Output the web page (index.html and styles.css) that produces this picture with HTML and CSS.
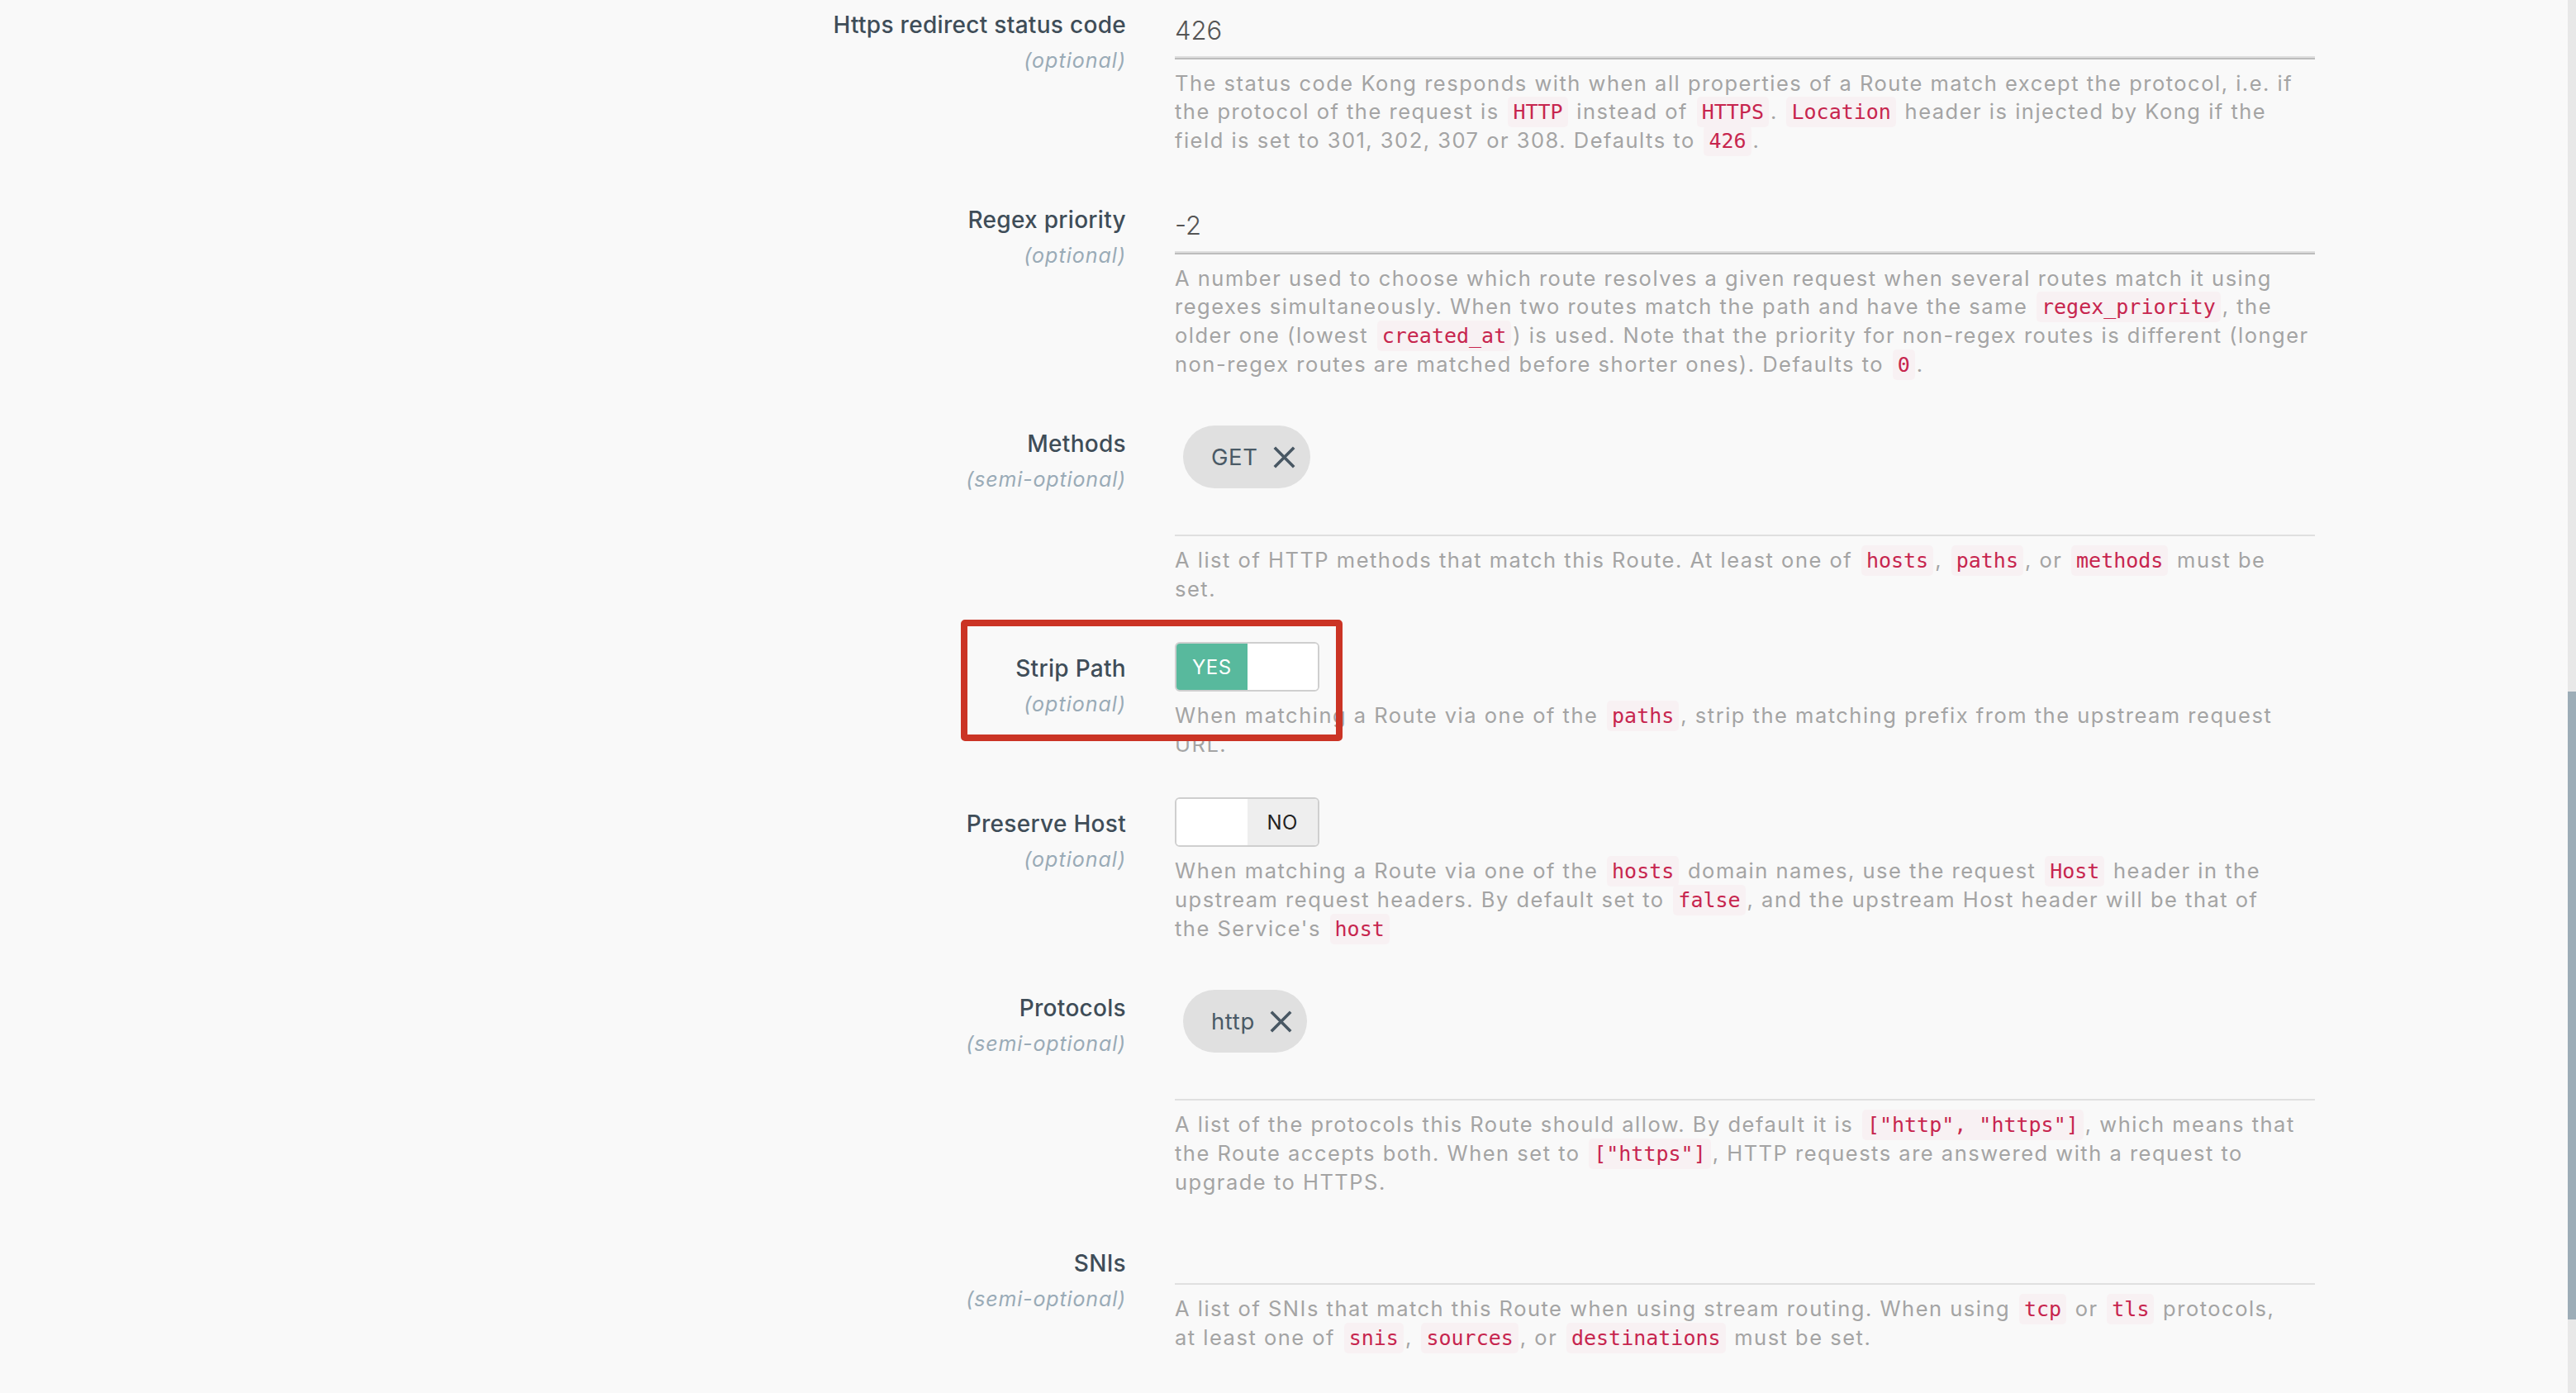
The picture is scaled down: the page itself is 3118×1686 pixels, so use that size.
FILE: index.html
```html
<!DOCTYPE html>
<html lang="en">
<head>
<meta charset="utf-8">
<title>Route form</title>
<link rel="stylesheet" href="styles.css">
</head>
<body>
<main class="page">
  <form class="form">
    <div class="row row-text">
      <div class="label-col">
        <div class="label">Https redirect status code</div>
        <div class="hint">(optional)</div>
      </div>
      <div class="control">
        <div class="text-input">426</div>
        <p class="desc">The status code Kong responds with when all properties of a Route match except the protocol, i.e. if the protocol of the request is <code>HTTP</code> instead of <code>HTTPS</code>. <code>Location</code> header is injected by Kong if the field is set to 301, 302, 307 or 308. Defaults to <code>426</code>.</p>
      </div>
    </div>

    <div class="row row-text">
      <div class="label-col">
        <div class="label">Regex priority</div>
        <div class="hint">(optional)</div>
      </div>
      <div class="control">
        <div class="text-input">-2</div>
        <p class="desc">A number used to choose which route resolves a given request when several routes match it using regexes simultaneously. When two routes match the path and have the same <code>regex_priority</code>, the older one (lowest <code>created_at</code>) is used. Note that the priority for non-regex routes is different (longer non-regex routes are matched before shorter ones). Defaults to <code>0</code>.</p>
      </div>
    </div>

    <div class="row row-select">
      <div class="label-col">
        <div class="label">Methods</div>
        <div class="hint semi">(semi-optional)</div>
      </div>
      <div class="control">
        <div class="select">
          <div class="chips">
            <span class="chip">GET<svg class="chip-x" viewBox="0 0 27 27" width="27" height="27"><path d="M1.8 1.8 L25.2 25.2 M25.2 1.8 L1.8 25.2" stroke="#485763" stroke-width="3.6" fill="none"/></svg></span>
          </div>
          <div class="select-line"></div>
        </div>
        <p class="desc">A list of HTTP methods that match this Route. At least one of <code>hosts</code>, <code>paths</code>, or <code>methods</code> must be<br>set.</p>
      </div>
    </div>

    <div class="row row-toggle">
      <div class="label-col">
        <div class="label">Strip Path</div>
        <div class="hint">(optional)</div>
      </div>
      <div class="control">
        <div class="toggle">
          <span class="toggle-half on">YES</span>
          <span class="toggle-half blank"></span>
        </div>
        <p class="desc">When matching a Route via one of the <code>paths</code>, strip the matching prefix from the upstream request URL.</p>
      </div>
      <div class="highlight"></div>
    </div>

    <div class="row row-toggle">
      <div class="label-col">
        <div class="label">Preserve Host</div>
        <div class="hint">(optional)</div>
      </div>
      <div class="control">
        <div class="toggle">
          <span class="toggle-half blank"></span>
          <span class="toggle-half off">NO</span>
        </div>
        <p class="desc">When matching a Route via one of the <code>hosts</code> domain names, use the request <code>Host</code> header in the upstream request headers. By default set to <code>false</code>, and the upstream Host header will be that of<br>the Service's <code>host</code></p>
      </div>
    </div>

    <div class="row row-select">
      <div class="label-col">
        <div class="label">Protocols</div>
        <div class="hint semi">(semi-optional)</div>
      </div>
      <div class="control">
        <div class="select">
          <div class="chips">
            <span class="chip">http<svg class="chip-x" viewBox="0 0 27 27" width="27" height="27"><path d="M1.8 1.8 L25.2 25.2 M25.2 1.8 L1.8 25.2" stroke="#485763" stroke-width="3.6" fill="none"/></svg></span>
          </div>
          <div class="select-line"></div>
        </div>
        <p class="desc">A list of the protocols this Route should allow. By default it is <code>["http", "https"]</code>, which means that the Route accepts both. When set to <code>["https"]</code>, HTTP requests are answered with a request to upgrade to HTTPS.</p>
      </div>
    </div>

    <div class="row row-select row-last">
      <div class="label-col">
        <div class="label">SNIs</div>
        <div class="hint semi">(semi-optional)</div>
      </div>
      <div class="control">
        <div class="select">
          <div class="select-line"></div>
        </div>
        <p class="desc">A list of SNIs that match this Route when using stream routing. When using <code>tcp</code> or <code>tls</code> protocols,<br>at least one of <code>snis</code>, <code>sources</code>, or <code>destinations</code> must be set.</p>
      </div>
    </div>
  </form>
</main>
<div class="scrollbar"><div class="scrollbar-thumb"></div></div>
</body>
</html>
```

FILE: styles.css
```css
html, body {
  margin: 0;
  padding: 0;
  height: 100%;
  overflow: hidden;
  background: #f9f9f9;
}

body {
  font-family: Inter, "Open Sans", "Liberation Sans", sans-serif;
  color: #a4a4a4;
}

.page {
  width: 3108px;
  height: 1686px;
  overflow: hidden;
}

.form {
  padding-left: 963px;
  padding-top: 12px;
}

.row {
  position: relative;
  display: grid;
  grid-template-columns: 400px 1380px;
  column-gap: 59px;
  margin-bottom: 60px;
}

.row-toggle {
  padding-top: 1px;
}

.row-last {
  padding-top: 3px;
}

.label-col {
  text-align: right;
}

.label {
  font-size: 28px;
  line-height: 36px;
  font-weight: 500;
  letter-spacing: 0.3px;
  color: #3f4d58;
}

.hint {
  margin-top: 8px;
  font-size: 25px;
  line-height: 34px;
  font-style: italic;
  letter-spacing: 1px;
  color: #9aabb7;
}

.hint.semi {
  letter-spacing: 0.85px;
}

.control {
  min-width: 0;
}

.text-input {
  height: 57px;
  line-height: 50px;
  font-size: 31px;
  font-weight: 300;
  color: #555;
  border-bottom: 2px solid #bdbdbd;
  box-shadow: inset 0 -2px 0 #dedede;
  padding-bottom: 1px;
}

.desc {
  margin: 12px 0 0;
  font-size: 25.5px;
  line-height: 34px;
  font-weight: 400;
  letter-spacing: 1.5px;
  color: #a4a4a4;
}

code {
  font-family: "DejaVu Sans Mono", "Liberation Mono", monospace;
  font-size: 25px;
  letter-spacing: 0;
  color: #c7254e;
  background: #f8f1f3;
  border-radius: 5px;
  padding: 4px 6px;
  margin: 0 2px;
}

/* multi select */
.row-select .control {
  margin-top: -4px;
}

.select {
  display: flex;
  flex-direction: column;
}

.chips {
  display: flex;
  gap: 10px;
  padding-left: 10px;
  margin-bottom: 10px;
}

.chip {
  display: inline-flex;
  align-items: center;
  height: 76px;
  padding: 0 18px 0 34px;
  border-radius: 38px;
  background: #e0e0e0;
  color: #4a5a66;
  font-size: 27.5px;
  font-weight: 400;
  letter-spacing: 0.6px;
  gap: 18px;
}

.chip-x {
  display: block;
}

.select-line {
  height: 46px;
  border-bottom: 2px solid #e0e0e0;
}

/* toggle */
.row-toggle .control {
  margin-top: -14px;
}

.toggle {
  display: flex;
  width: 175px;
  height: 60px;
  box-sizing: border-box;
  border: 2px solid #cfcfcf;
  border-radius: 6px;
  overflow: hidden;
  background: #fff;
}

.toggle-half {
  flex: 1;
  display: flex;
  align-items: center;
  justify-content: center;
  font-size: 24px;
  letter-spacing: 0.5px;
}

.toggle-half.on {
  background: #58b99d;
  color: #fff;
}

.toggle-half.off {
  background: #eeeeee;
  color: #222;
}

.toggle-half.blank {
  background: #fff;
}

/* annotation box */
.highlight {
  position: absolute;
  left: 200px;
  top: -40px;
  width: 462px;
  height: 147px;
  box-sizing: border-box;
  border: 8px solid #cb3425;
  border-radius: 5px;
  pointer-events: none;
}

/* scrollbar */
.scrollbar {
  position: fixed;
  top: 0;
  right: 0;
  width: 10px;
  height: 1686px;
  background: #e8e8e8;
}

.scrollbar-thumb {
  position: absolute;
  left: 0;
  top: 837px;
  width: 10px;
  height: 760px;
  background: #9dadb7;
}
```
